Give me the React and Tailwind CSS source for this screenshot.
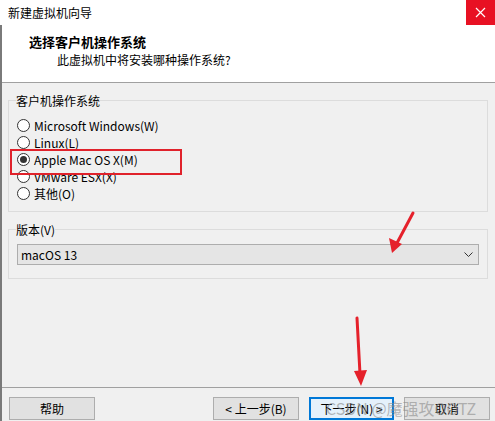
import React from 'react';

const font = { fontFamily: '"Noto Sans CJK SC", "Noto Sans", sans-serif' };

const options = [
  { label: 'Microsoft Windows(W)' },
  { label: 'Linux(L)' },
  { label: 'Apple Mac OS X(M)', checked: true },
  { label: 'VMware ESX(X)' },
  { label: '其他(O)' },
];

const Radio = ({ checked }) => (
  <span className="w-[13px] h-[13px] rounded-full border border-[#333] bg-white flex items-center justify-center shrink-0">
    {checked && <span className="w-[7px] h-[7px] rounded-full bg-[#333]" />}
  </span>
);

const Button = ({ children, primary }) => (
  <button
    className={
      primary
        ? 'w-[85px] h-[23px] bg-[#e5f1fb] border-2 border-[#0078d7] text-[12px] leading-none'
        : 'w-[86px] h-[23px] bg-[#e1e1e1] border border-[#adadad] text-[12px] leading-none'
    }
  >
    {children}
  </button>
);

export default function App() {
  return (
    <div className="relative w-[495px] h-[421px] overflow-hidden flex flex-col bg-[#f0f0f0] text-black" style={font}>
      {/* title bar */}
      <div className="h-[25px] bg-white flex items-center justify-between shrink-0">
        <span className="pl-[8px] text-[12px]">新建虚拟机向导</span>
        <div className="w-[29px] h-[25px] bg-[#e81123] flex items-center justify-center">
          <svg width="11" height="11" viewBox="0 0 11 11">
            <path d="M1 1L10 10M10 1L1 10" stroke="white" strokeWidth="1.2" />
          </svg>
        </div>
      </div>

      <div className="flex-1 flex flex-col border-l-2 border-[#7a7a7a]">
        {/* header */}
        <div className="h-[58px] bg-white border-b border-[#a0a0a0] pt-[8px] shrink-0">
          <div className="pl-[27px] text-[13px] font-bold leading-[17px]">选择客户机操作系统</div>
          <div className="pl-[55px] text-[12px] leading-[17px] mt-[1px]">此虚拟机中将安装哪种操作系统?</div>
        </div>

        {/* body */}
        <div className="flex-1 pl-[6px] pr-[7px] pt-[9px]">
          <fieldset className="border border-[#dcdcdc] px-[8px] pt-[8px] pb-[9px]">
            <legend className="text-[12px] leading-[17px] -ml-px px-0">客户机操作系统</legend>
            <div className="flex flex-col">
              {options.map((o) => (
                <label key={o.label} className="h-[17px] flex items-center gap-[4px] text-[12px]">
                  <Radio checked={o.checked} />
                  <span>{o.label}</span>
                </label>
              ))}
            </div>
          </fieldset>

          <fieldset className="mt-[9px] border border-[#dcdcdc] px-[8px] pt-[6px] pb-[13px]">
            <legend className="text-[12px] leading-[17px] -ml-px px-0">版本(V)</legend>
            <div className="h-[21px] bg-[#e5e5e5] border border-[#adadad] flex items-center justify-between pl-[3px] pr-[5px] text-[12px]">
              <span>macOS 13</span>
              <svg width="9" height="6" viewBox="0 0 9 6">
                <path d="M0.5 0.5L4.5 4.5L8.5 0.5" fill="none" stroke="#333" strokeWidth="1" />
              </svg>
            </div>
          </fieldset>
        </div>

        {/* footer */}
        <div className="h-[34px] border-t border-[#a0a0a0] pt-[9px] pl-[7px] pr-[5px] flex shrink-0">
          <Button>帮助</Button>
          <div className="flex-1" />
          <div className="flex gap-[10px]">
            <Button>&lt; 上一步(B)</Button>
            <Button primary>下一步(N) &gt;</Button>
            <Button>取消</Button>
          </div>
        </div>
      </div>

      {/* annotations */}
      <div className="absolute left-[10px] top-[149px] w-[172px] h-[26px] border-2 border-[#e0222b]" />
      <svg className="absolute left-0 top-0 pointer-events-none" width="495" height="421">
        <line x1="413" y1="213" x2="397" y2="243" stroke="#e5212b" strokeWidth="3" strokeLinecap="round" />
        <polygon points="392,253 389,238 402,244" fill="#e5212b" />
        <line x1="357" y1="318" x2="360" y2="374" stroke="#e5212b" strokeWidth="3" strokeLinecap="round" />
        <polygon points="361,386 354,371 367,370" fill="#e5212b" />
      </svg>
      <div className="absolute left-[326px] top-[398px] text-[16px] leading-[20px] text-[#8a8a8a]/60 pointer-events-none whitespace-nowrap">
        CSDN @魔强攻OOTZ
      </div>
    </div>
  );
}
